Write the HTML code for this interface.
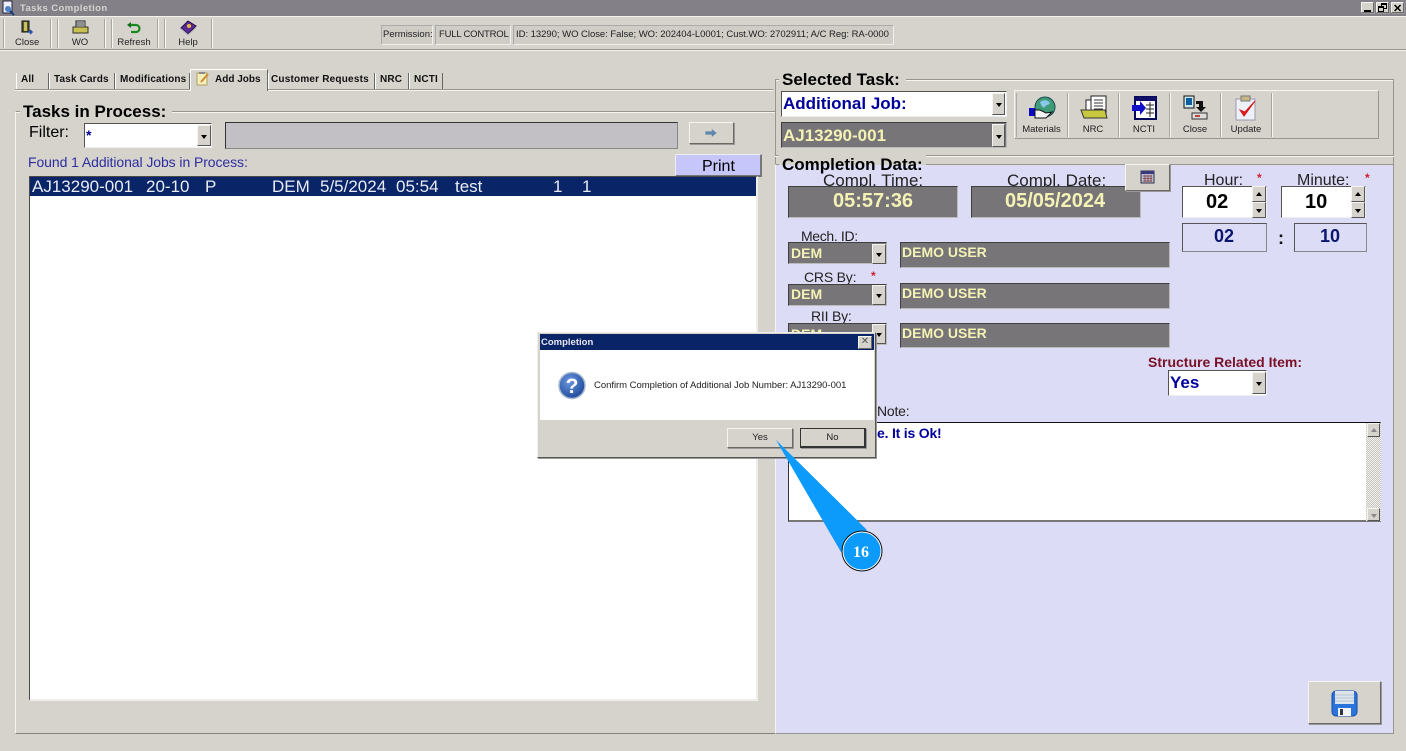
<!DOCTYPE html>
<html><head><meta charset="utf-8"><title>Tasks Completion</title>
<style>
html,body{margin:0;padding:0}
body{width:1406px;height:751px;position:relative;overflow:hidden;background:#d6d3cd;font-family:"Liberation Sans",sans-serif;color:#000}
.a,.t{position:absolute;box-sizing:border-box}
.t{white-space:pre;line-height:1}
.raised{background:#d6d3cd;border:1px solid;border-color:#f5f4f1 #6a6864 #6a6864 #f5f4f1;box-shadow:1px 1px 0 #999}
.sunk{border:1px solid;border-color:#55534f #eee #eee #55534f}
.gray{background:#777578;border:1px solid;border-color:#403f40 #bbb #bbb #403f40}
.arrow{position:absolute;box-sizing:border-box;background:#d6d3cd;border:1px solid;border-color:#f5f4f1 #555 #555 #f5f4f1}
.arrow:after{content:"";position:absolute;left:50%;top:50%;margin:-1px 0 0 -3px;border:3px solid transparent;border-top:4px solid #000;border-bottom:0}
.up:after{border-top:0;border-bottom:4px solid #000;margin-top:-2px}
.lite:after{border-top-color:#888;border-bottom-color:#888}
.tab{position:absolute;top:73px;height:16px;border-right:1px solid #666;border-left:1px solid #fff;font:bold 10px "Liberation Sans",sans-serif;letter-spacing:.15px;line-height:14px;color:#111;padding-left:4px;box-sizing:border-box;white-space:pre}
.vsep{position:absolute;width:0;border-left:1px solid #a8a5a0;border-right:1px solid #f7f6f3}
.lab{font-size:9.5px;color:#222;text-align:center;position:absolute;line-height:1;white-space:pre}
</style></head><body>

<!-- title bar -->
<div class="a" style="left:0;top:0;width:1406px;height:16px;background:#838187"></div>
<div class="a" style="left:0;top:16px;width:1406px;height:1px;background:#f2f1ee"></div>
<svg class="a" style="left:1px;top:0" width="15" height="16" viewBox="0 0 15 16"><rect x="2" y="1" width="9" height="12" fill="#eef" stroke="#223"/><circle cx="7" cy="9" r="3" fill="#4a80c8"/><path d="M9 11l4 4" stroke="#123a80" stroke-width="2"/></svg>
<div class="t" style="left:20px;top:3px;font:bold 9.500px 'Liberation Sans',sans-serif;color:#d6d4d2;letter-spacing:.4px">Tasks Completion</div>
<div class="a raised" style="left:1361px;top:2px;width:13px;height:11px"><div class="a" style="left:2px;top:7px;width:7px;height:2px;background:#000"></div></div>
<div class="a raised" style="left:1376px;top:2px;width:13px;height:11px"><div class="a" style="left:4px;top:0;width:6px;height:6px;border:1px solid #000;border-top-width:2px"></div><div class="a" style="left:1px;top:3px;width:6px;height:6px;border:1px solid #000;border-top-width:2px;background:#d6d3cd"></div></div>
<div class="a raised" style="left:1391px;top:2px;width:13px;height:11px"><div class="t" style="left:1px;top:-1px;font:bold 11px 'Liberation Sans',sans-serif;">✕</div></div>

<!-- toolbar -->
<div class="a" style="left:0;top:49px;width:1406px;height:1px;background:#98958f"></div>
<div class="a" style="left:0;top:50px;width:1406px;height:1px;background:#f2f1ee"></div>
<div class="vsep" style="left:3px;top:19px;height:29px"></div>
<div class="vsep" style="left:50px;top:19px;height:29px"></div>
<div class="vsep" style="left:57px;top:19px;height:29px"></div>
<div class="vsep" style="left:104px;top:19px;height:29px"></div>
<div class="vsep" style="left:111px;top:19px;height:29px"></div>
<div class="vsep" style="left:157px;top:19px;height:29px"></div>
<div class="vsep" style="left:164px;top:19px;height:29px"></div>
<div class="vsep" style="left:211px;top:19px;height:29px"></div>
<svg class="a" style="left:19px;top:19px" width="16" height="17" viewBox="0 0 16 17"><path d="M3 2h7v11H3z" fill="#5a5a30" stroke="#111"/><path d="M5 3h3v9H5z" fill="#c8c060"/><path d="M9 13h4m-2-2l2 2-2 2" stroke="#2a50b0" fill="none" stroke-width="1.500"/></svg>
<svg class="a" style="left:72px;top:20px" width="17" height="15" viewBox="0 0 17 15"><rect x="4" y="1" width="9" height="6" fill="#ddd" stroke="#222"/><path d="M1 7h15v6H1z" fill="#c8c050" stroke="#333"/><path d="M4 3h8M4 5h8" stroke="#444"/></svg>
<svg class="a" style="left:126px;top:21px" width="15" height="14" viewBox="0 0 15 14"><path d="M3 4h7a3 3 0 0 1 0 7H5" fill="none" stroke="#1a8a20" stroke-width="2.200"/><path d="M5 1L1 4l4 3z" fill="#156a18"/></svg>
<svg class="a" style="left:180px;top:20px" width="17" height="16" viewBox="0 0 17 16"><path d="M8 1l8 5-8 8-7-6z" fill="#5a2a98" stroke="#221040"/><path d="M1 9l7 6 8-7" fill="none" stroke="#bbb" stroke-width="1.300"/><circle cx="9" cy="6" r="2" fill="#e8c030"/></svg>
<div class="lab" style="left:15px;top:38px;width:24px">Close</div>
<div class="lab" style="left:70px;top:38px;width:20px">WO</div>
<div class="lab" style="left:115px;top:38px;width:38px">Refresh</div>
<div class="lab" style="left:175px;top:38px;width:26px">Help</div>

<div class="a" style="left:381px;top:25px;width:52px;height:20px;background:#d0cdc7;border:1px solid;border-color:#aaa #eee #eee #aaa"></div>
<div class="t" style="left:383px;top:30px;font-size:9.500px;color:#222">Permission:</div>
<div class="a" style="left:435px;top:25px;width:76px;height:20px;background:#d0cdc7;border:1px solid;border-color:#aaa #eee #eee #aaa"></div>
<div class="t" style="left:439px;top:30px;font-size:9.500px;letter-spacing:-.2px;color:#222">FULL CONTROL</div>
<div class="a" style="left:513px;top:25px;width:381px;height:20px;background:#d0cdc7;border:1px solid;border-color:#aaa #eee #eee #aaa"></div>
<div class="t" style="left:516px;top:30px;font-size:9.500px;letter-spacing:-.03px;color:#222">ID: 13290; WO Close: False; WO: 202404-L0001; Cust.WO: 2702911; A/C Reg: RA-0000</div>

<!-- tabs -->
<div class="a" style="left:15px;top:89px;width:758px;height:1px;background:#98958f"></div>
<div class="a" style="left:15px;top:90px;width:758px;height:1px;background:#f5f4f1"></div>
<div class="tab" style="left:16px;width:33px">All</div>
<div class="tab" style="left:49px;width:66px">Task Cards</div>
<div class="tab" style="left:115px;width:75px">Modifications</div>
<div class="a" style="left:190px;top:69px;width:78px;height:22px;background:#d6d3cd;border-left:1px solid #fff;border-top:1px solid #fff;border-right:1px solid #666"></div>
<svg class="a" style="left:196px;top:71px" width="14" height="15" viewBox="0 0 14 15"><path d="M1 2h10v12H1z" fill="#f3eebc" stroke="#b0a060"/><path d="M3 1h6v2H3z" fill="#8a8a8a"/><path d="M5 11l7-8" stroke="#d08a30" stroke-width="2"/></svg>
<div class="t" style="left:215px;top:74px;font:bold 10px 'Liberation Sans',sans-serif;color:#111">Add Jobs</div>
<div class="tab" style="left:268px;width:107px;padding-left:2px;letter-spacing:.2px">Customer Requests</div>
<div class="tab" style="left:375px;width:34px">NRC</div>
<div class="tab" style="left:409px;width:34px">NCTI</div>

<!-- left group -->
<div class="a" style="left:15px;top:111px;width:760px;height:623px;border:1px solid;border-color:#98958f transparent #85827d #f5f4f1;border-right:0"></div>
<div class="a" style="left:15px;top:112px;width:760px;height:1px;background:#f5f4f1"></div>
<div class="a" style="left:20px;top:101px;width:152px;height:20px;background:#d6d3cd"></div>
<div class="t" style="left:23px;top:102px;font:bold 17px 'Liberation Sans',sans-serif">Tasks in Process:</div>
<div class="t" style="left:29px;top:125px;font-size:16px">Filter:</div>
<div class="a sunk" style="left:84px;top:123px;width:128px;height:25px;background:#fff"></div>
<div class="t" style="left:86px;top:127px;font:bold 14px 'Liberation Sans',sans-serif;color:#00009a">*</div>
<div class="arrow" style="left:197px;top:125px;width:14px;height:21px"></div>
<div class="a" style="left:225px;top:122px;width:453px;height:27px;background:#c2c0c4;border:1px solid;border-color:#333 #888 #888 #333"></div>
<div class="a raised" style="left:689px;top:122px;width:45px;height:22px"></div>
<svg class="a" style="left:704px;top:129px" width="14" height="8" viewBox="0 0 16 10"><path d="M1 3h8V0l6 5-6 5V7H1z" fill="#5f86ad"/></svg>
<div class="t" style="left:28px;top:155px;font-size:14px;letter-spacing:-.08px;color:#2d2da0">Found 1 Additional Jobs in Process:</div>
<div class="a" style="left:675px;top:154px;width:87px;height:23px;background:#c6c6fa;border-top:1px solid #eee;border-left:1px solid #eee;border-right:2px solid #777;border-bottom:2px solid #777"></div>
<div class="t" style="left:702px;top:159px;font-size:16px">Print</div>

<div class="a" style="left:29px;top:176px;width:729px;height:525px;background:#fff;border:1px solid;border-width:1px 2px 2px 1px;border-color:#4a4948 #eeede9 #eeede9 #4a4948"></div>
<div class="a" style="left:30px;top:177px;width:726px;height:19px;background:#0a2468"></div>
<div class="t" style="left:32px;top:178px;font-size:17px;color:#e8ecf4">AJ13290-001</div>
<div class="t" style="left:146px;top:178px;font-size:17px;color:#e8ecf4">20-10</div>
<div class="t" style="left:205px;top:178px;font-size:17px;color:#e8ecf4">P</div>
<div class="t" style="left:272px;top:178px;font-size:17px;color:#e8ecf4">DEM</div>
<div class="t" style="left:320px;top:178px;font-size:17px;color:#e8ecf4">5/5/2024</div>
<div class="t" style="left:396px;top:178px;font-size:17px;color:#e8ecf4">05:54</div>
<div class="t" style="left:455px;top:178px;font-size:17px;color:#e8ecf4">test</div>
<div class="t" style="left:553px;top:178px;font-size:17px;color:#e8ecf4">1</div>
<div class="t" style="left:582px;top:178px;font-size:17px;color:#e8ecf4">1</div>

<!-- selected task group -->
<div class="a" style="left:775px;top:79px;width:619px;height:1px;background:#98958f"></div>
<div class="a" style="left:775px;top:80px;width:619px;height:1px;background:#f5f4f1"></div>
<div class="a" style="left:775px;top:79px;width:1px;height:85px;background:#98958f"></div>
<div class="a" style="left:1393px;top:79px;width:1px;height:85px;background:#98958f"></div>
<div class="a" style="left:779px;top:70px;width:127px;height:19px;background:#d6d3cd"></div>
<div class="t" style="left:782px;top:70px;font:bold 17px 'Liberation Sans',sans-serif">Selected Task:</div>
<div class="a sunk" style="left:781px;top:91px;width:226px;height:26px;background:#fff"></div>
<div class="t" style="left:783px;top:94px;font:bold 17px 'Liberation Sans',sans-serif;color:#00009a">Additional Job:</div>
<div class="arrow" style="left:992px;top:93px;width:13px;height:22px"></div>
<div class="a gray" style="left:781px;top:122px;width:226px;height:26px;background:#777578"></div>
<div class="t" style="left:783px;top:126px;font:bold 17px 'Liberation Sans',sans-serif;color:#f4f2b4">AJ13290-001</div>
<div class="arrow" style="left:992px;top:124px;width:13px;height:23px"></div>

<div class="a" style="left:1014px;top:90px;width:365px;height:49px;border:1px solid;border-color:#f5f4f1 #98958f #98958f #f5f4f1"></div>
<div class="vsep" style="left:1016px;top:93px;height:44px;border-right:0;border-left:1px solid #aaa"></div>
<div class="vsep" style="left:1067px;top:93px;height:44px"></div>
<div class="vsep" style="left:1118px;top:93px;height:44px"></div>
<div class="vsep" style="left:1169px;top:93px;height:44px"></div>
<div class="vsep" style="left:1220px;top:93px;height:44px"></div>
<div class="vsep" style="left:1271px;top:93px;height:44px"></div>
<svg class="a" style="left:1028px;top:96px" width="30" height="24" viewBox="0 0 30 24"><circle cx="17" cy="11" r="10" fill="#3f9a78" stroke="#1a4a50"/><path d="M12 6c4-3 8-2 10 1-2 3-4 1-5 4-2 2-4-2-5-5z" fill="#8ac8e8"/><rect x="1" y="12" width="6" height="8" fill="#0a0ac0"/><path d="M7 14h5l6 3 6-1-6 6H7z" fill="#f4f4f4" stroke="#111"/></svg>
<svg class="a" style="left:1080px;top:95px" width="28" height="25" viewBox="0 0 28 25"><path d="M6 5h6v12H6z" fill="#fff" stroke="#222"/><path d="M11 1h15v17H11z" fill="#fff" stroke="#222"/><path d="M14 5h9M14 8h9M14 11h9M14 14h9" stroke="#333"/><path d="M1 15h24l2 8H4z" fill="#c8c840" stroke="#333"/></svg>
<svg class="a" style="left:1131px;top:96px" width="26" height="24" viewBox="0 0 26 24"><rect x="4" y="1" width="21" height="22" fill="#fff" stroke="#08085a" stroke-width="2"/><rect x="4" y="1" width="21" height="4" fill="#10106a"/><path d="M15 9h8M15 13h8M15 17h8M19 6v15" stroke="#222"/><path d="M1 9h8V5l6 7-6 7v-4H1z" fill="#1010c8"/></svg>
<svg class="a" style="left:1183px;top:95px" width="26" height="25" viewBox="0 0 26 25"><rect x="1" y="1" width="10" height="12" fill="#cfe8f0" stroke="#111"/><rect x="3" y="3" width="6" height="7" fill="#0a60a0"/><path d="M13 6h7v6h3l-5 5-5-5h3V9h-3z" fill="#111"/><rect x="9" y="18" width="15" height="6" fill="#ddd" stroke="#333"/><rect x="12" y="20" width="5" height="2" fill="#c04040"/></svg>
<svg class="a" style="left:1234px;top:95px" width="25" height="26" viewBox="0 0 25 26"><rect x="2" y="4" width="19" height="21" fill="#eef2f8" stroke="#99a"/><rect x="7" y="1" width="9" height="5" fill="#c8b888" stroke="#777"/><path d="M6 15l4 6L21 6l-10 11z" fill="#e02020" stroke="#d01818"/></svg>
<div class="lab" style="left:1021px;top:125px;width:41px">Materials</div>
<div class="lab" style="left:1082px;top:125px;width:22px">NRC</div>
<div class="lab" style="left:1132px;top:125px;width:24px">NCTI</div>
<div class="lab" style="left:1182px;top:125px;width:26px">Close</div>
<div class="lab" style="left:1228px;top:125px;width:36px">Update</div>

<!-- completion group -->
<div class="a" style="left:775px;top:164px;width:619px;height:570px;background:#dddcf6;border:1px solid;border-color:#98958f #98958f #98958f #f5f4f1"></div>
<div class="a" style="left:775px;top:155px;width:619px;height:1px;background:#98958f"></div>
<div class="a" style="left:775px;top:156px;width:619px;height:1px;background:#f5f4f1"></div>
<div class="a" style="left:779px;top:155px;width:147px;height:10px;background:#d6d3cd"></div>
<div class="a" style="left:779px;top:165px;width:147px;height:8px;background:#dddcf6"></div>
<div class="t" style="left:782px;top:155px;font:bold 17px 'Liberation Sans',sans-serif">Completion Data:</div>

<div class="t" style="left:823px;top:172px;font-size:17px;color:#222">Compl. Time:</div>
<div class="t" style="left:1007px;top:172px;font-size:17px;color:#222">Compl. Date:</div>
<div class="a gray" style="left:788px;top:186px;width:170px;height:32px"></div>
<div class="t" style="left:833px;top:190px;font:bold 20px 'Liberation Sans',sans-serif;color:#f4f2b4">05:57:36</div>
<div class="a gray" style="left:971px;top:186px;width:170px;height:32px"></div>
<div class="t" style="left:1005px;top:190px;font:bold 20px 'Liberation Sans',sans-serif;color:#f4f2b4">05/05/2024</div>
<div class="a raised" style="left:1125px;top:164px;width:45px;height:27px"></div>
<svg class="a" style="left:1140px;top:170px" width="15" height="14" viewBox="0 0 15 14"><rect x="1" y="1" width="13" height="12" fill="#b8b8d0" stroke="#334"/><rect x="1" y="1" width="13" height="3" fill="#3a3a80"/><path d="M3 6h9M3 8.500h9M3 11h9M5 5v7M8 5v7M11 5v7" stroke="#804040" stroke-width=".8"/></svg>

<div class="t" style="left:1204px;top:173px;font-size:16px;color:#222">Hour:</div>
<div class="t" style="left:1257px;top:171px;font:bold 12px 'Liberation Sans',sans-serif;color:#d02030">*</div>
<div class="t" style="left:1297px;top:173px;font-size:16px;color:#222">Minute:</div>
<div class="t" style="left:1365px;top:171px;font:bold 12px 'Liberation Sans',sans-serif;color:#d02030">*</div>
<div class="a sunk" style="left:1182px;top:186px;width:85px;height:32px;background:#fff"></div>
<div class="t" style="left:1206px;top:191px;font:bold 20px 'Liberation Sans',sans-serif">02</div>
<div class="arrow up" style="left:1252px;top:186px;width:14px;height:16px"></div>
<div class="arrow" style="left:1252px;top:202px;width:14px;height:16px"></div>
<div class="a sunk" style="left:1281px;top:186px;width:85px;height:32px;background:#fff"></div>
<div class="t" style="left:1305px;top:191px;font:bold 20px 'Liberation Sans',sans-serif">10</div>
<div class="arrow up" style="left:1351px;top:186px;width:14px;height:16px"></div>
<div class="arrow" style="left:1351px;top:202px;width:14px;height:16px"></div>
<div class="a" style="left:1182px;top:223px;width:85px;height:29px;border:1px solid;border-color:#555 #888 #888 #555"></div>
<div class="t" style="left:1214px;top:226px;font:bold 18px 'Liberation Sans',sans-serif;color:#0a1670">02</div>
<div class="t" style="left:1278px;top:228px;font:bold 18px 'Liberation Sans',sans-serif;color:#111">:</div>
<div class="a" style="left:1294px;top:223px;width:73px;height:29px;border:1px solid;border-color:#555 #888 #888 #555"></div>
<div class="t" style="left:1320px;top:226px;font:bold 18px 'Liberation Sans',sans-serif;color:#0a1670">10</div>

<div class="t" style="left:801px;top:229px;font-size:14px;letter-spacing:-.35px;color:#222">Mech. ID:</div>
<div class="a gray" style="left:788px;top:242px;width:99px;height:22px"></div>
<div class="t" style="left:791px;top:245px;font:bold 14px 'Liberation Sans',sans-serif;color:#f4f2b4">DEM</div>
<div class="arrow" style="left:872px;top:244px;width:14px;height:20px"></div>
<div class="a gray" style="left:900px;top:242px;width:270px;height:26px"></div>
<div class="t" style="left:902px;top:244px;font:bold 14px 'Liberation Sans',sans-serif;color:#f4f2b4">DEMO USER</div>

<div class="t" style="left:804px;top:270px;font-size:14px;letter-spacing:-.2px;color:#222">CRS By:</div>
<div class="t" style="left:871px;top:269px;font:bold 12px 'Liberation Sans',sans-serif;color:#d02030">*</div>
<div class="a gray" style="left:788px;top:284px;width:99px;height:22px"></div>
<div class="t" style="left:791px;top:286px;font:bold 14px 'Liberation Sans',sans-serif;color:#f4f2b4">DEM</div>
<div class="arrow" style="left:872px;top:285px;width:14px;height:20px"></div>
<div class="a gray" style="left:900px;top:283px;width:270px;height:26px"></div>
<div class="t" style="left:902px;top:285px;font:bold 14px 'Liberation Sans',sans-serif;color:#f4f2b4">DEMO USER</div>

<div class="t" style="left:811px;top:309px;font-size:14px;letter-spacing:-.2px;color:#222">RII By:</div>
<div class="a gray" style="left:788px;top:323px;width:99px;height:22px"></div>
<div class="t" style="left:791px;top:326px;font:bold 14px 'Liberation Sans',sans-serif;color:#f4f2b4">DEM</div>
<div class="arrow" style="left:872px;top:324px;width:14px;height:20px"></div>
<div class="a gray" style="left:900px;top:323px;width:270px;height:25px"></div>
<div class="t" style="left:902px;top:325px;font:bold 14px 'Liberation Sans',sans-serif;color:#f4f2b4">DEMO USER</div>

<div class="t" style="left:1148px;top:354px;font:bold 14px 'Liberation Sans',sans-serif;color:#7a1028">Structure Related Item:</div>
<div class="a sunk" style="left:1168px;top:370px;width:99px;height:26px;background:#fff"></div>
<div class="t" style="left:1170px;top:373px;font:bold 17px 'Liberation Sans',sans-serif;color:#00009a">Yes</div>
<div class="arrow" style="left:1252px;top:372px;width:14px;height:22px"></div>

<div class="t" style="left:877px;top:404px;font-size:14px;letter-spacing:-.2px;color:#222">Note:</div>
<div class="a" style="left:788px;top:422px;width:593px;height:100px;background:#fff;border:1px solid;border-color:#111 #888 #777 #333;border-bottom-width:2px"></div>
<div class="t" style="left:877px;top:425px;font:bold 14px 'Liberation Sans',sans-serif;letter-spacing:-.2px;color:#00009a">e. It is Ok!</div>
<div class="a" style="left:1366px;top:423px;width:15px;height:98px;background:repeating-conic-gradient(#f0efec 0 25%,#c8c6c0 0 50%) 0 0/2px 2px"></div>
<div class="arrow up lite" style="left:1367px;top:423px;width:13px;height:14px"></div>
<div class="arrow lite" style="left:1367px;top:508px;width:13px;height:13px"></div>

<div class="a raised" style="left:1308px;top:681px;width:73px;height:43px"></div>
<svg class="a" style="left:1331px;top:690px" width="27" height="27" viewBox="0 0 27 27"><rect x="1" y="1" width="25" height="25" rx="4" fill="#2a74dc" stroke="#1a4aa0"/><rect x="4" y="1" width="19" height="13" fill="#dce4ec"/><path d="M4 5h19M4 8h19M4 11h19" stroke="#b8c4d0"/><rect x="7" y="18" width="13" height="8" fill="#f2f4f8"/><rect x="9" y="19" width="3" height="6" fill="#334"/></svg>

<!-- dialog -->
<div class="a" style="left:537px;top:332px;width:339px;height:126px;background:#d6d3cd;border:1px solid;border-color:#f0efec #555 #555 #f0efec;box-shadow:1px 1px 0 #999"></div>
<div class="a" style="left:540px;top:334px;width:334px;height:16px;background:#0a2468"></div>
<div class="t" style="left:541px;top:337px;font:bold 9.500px 'Liberation Sans',sans-serif;color:#e8e8f0">Completion</div>
<div class="a raised" style="left:858px;top:336px;width:14px;height:13px;box-shadow:none;color:#555;font-size:10px;line-height:10px;text-align:center">✕</div>
<div class="a" style="left:540px;top:350px;width:334px;height:70px;background:#fff"></div>
<svg class="a" style="left:557px;top:371px" width="30" height="29" viewBox="0 0 30 29"><defs><radialGradient id="g" cx=".4" cy=".35" r=".8"><stop offset="0" stop-color="#6c98e0"/><stop offset="1" stop-color="#103a8c"/></radialGradient></defs><circle cx="15" cy="14.500" r="13" fill="url(#g)" stroke="#a8b8d0" stroke-width="1.500"/><text x="15" y="22" text-anchor="middle" font-family="Liberation Sans,sans-serif" font-weight="bold" font-size="21" fill="#fff">?</text></svg>
<div class="t" style="left:594px;top:381px;font-size:9.500px;letter-spacing:-.03px;color:#222">Confirm Completion of Additional Job Number: AJ13290-001</div>
<div class="a raised" style="left:727px;top:428px;width:66px;height:20px;text-align:center;font-size:9.500px;line-height:18px;color:#222">Yes</div>
<div class="a raised" style="left:800px;top:428px;width:66px;height:20px;border:1px solid #333;border-bottom-width:2px;border-right-width:2px;text-align:center;font-size:9.500px;line-height:18px;color:#222">No</div>

<!-- callout -->
<svg class="a" style="left:770px;top:435px" width="120" height="140" viewBox="0 0 120 140"><path d="M6 5L97 95 L71 117 Z" fill="#0d9bfb"/><circle cx="92" cy="116" r="19" fill="#0d9bfb" stroke="#fff" stroke-width="1"/><circle cx="92" cy="116" r="20" fill="none" stroke="#111" stroke-width="1"/></svg>
<div class="t" style="left:853px;top:544px;font:bold 16px 'Liberation Serif',serif;color:#fff">16</div>

</body></html>
